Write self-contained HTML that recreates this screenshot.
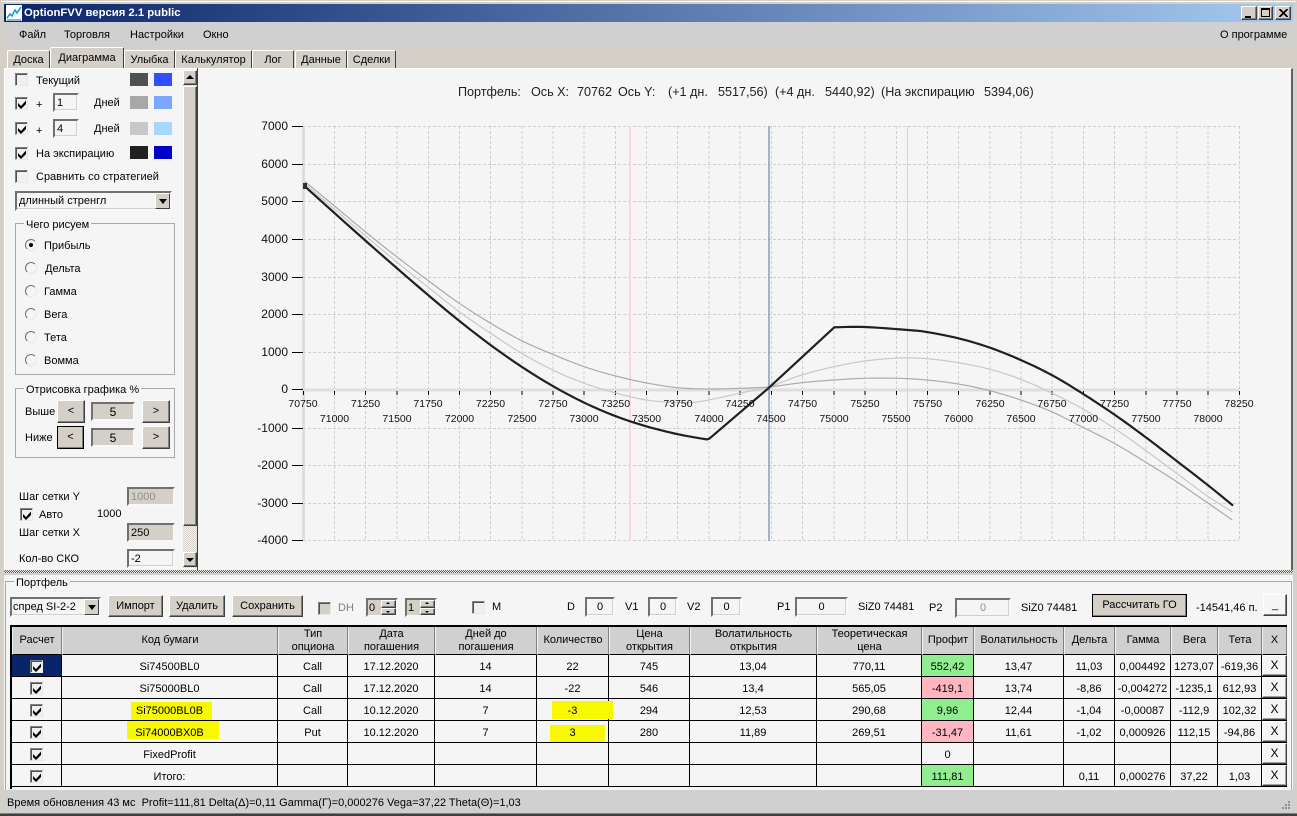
<!DOCTYPE html>
<html><head><meta charset="utf-8"><title>OptionFVV</title>
<style>
*{box-sizing:border-box}
html,body{margin:0;padding:0;width:1297px;height:816px;overflow:hidden;background:#d4d0c8;font:11px/14px "Liberation Sans","Noto Sans CJK SC",sans-serif;color:#000}
.a{position:absolute}
.t{position:absolute;white-space:nowrap;height:14px;line-height:14px;font-size:11px}
.raised{position:absolute;background:#d4d0c8;border:1px solid;border-color:#fff #404040 #404040 #fff;box-shadow:inset -1px -1px 0 #808080;text-align:center}
.sunk{position:absolute;background:#f5f5f5;border:2px solid;border-color:#707070 #f8f8f8 #f8f8f8 #707070;box-shadow:inset -1px -1px 0 #d4d0c8;line-height:17px;font-size:11px;white-space:nowrap;overflow:hidden}
.cb{position:absolute;width:13px;height:13px;background:#f0f0f0;border:1px solid;border-color:#808080 #e8e8e8 #e8e8e8 #808080;box-shadow:inset 1px 1px 0 #505050}
.cb svg{position:absolute;left:1px;top:1px;width:10px;height:10px}
.rd{position:absolute;width:12px;height:12px;border-radius:50%;background:#f5f5f5;border:1px solid;border-color:#707070 #e8e8e8 #e8e8e8 #707070}
.sw{position:absolute;width:18px;height:13px}
.grp{position:absolute;border:1px solid #a8a8a8}
.leg{position:absolute;background:#f5f5f5;padding:0 2px;white-space:nowrap;height:14px;line-height:14px}
.tab{position:absolute;top:50px;height:18px;background:#d4d0c8;border:1px solid;border-color:#fff #404040 #d4d0c8 #fff;border-bottom:0;border-radius:2px 2px 0 0;text-align:center;line-height:18px;font-size:11px;white-space:nowrap}
table{border-collapse:separate;border-spacing:0;table-layout:fixed;position:absolute;left:12px;top:627px;width:1274px;background:#f5f5f5}
th{height:28px;background:#d0d0d0;font-weight:normal;font-size:11px;line-height:13px;padding:0;border-left:1px solid #f0f0f0;border-right:1px solid #808080;border-bottom:1px solid #000;text-align:center;overflow:hidden}
td{height:22px;font-size:11px;padding:2px 0 0;border-right:1px solid #000;border-bottom:1px solid #000;text-align:center;position:relative;white-space:nowrap;overflow:visible}
td .cb{left:18px;top:5px}
td .x{position:absolute;left:0;top:0;width:25px;height:21px;background:#f5f5f5;border:1px solid;border-color:#fff #404040 #404040 #fff;box-shadow:inset -1px -1px 0 #a0a0a0;line-height:19px;font-size:12px}
.g{background:#90ee90}.p{background:#ffb6c1}
.y{position:absolute;background:#f8f800}
.dd{position:absolute;background:#d4d0c8;border:1px solid;border-color:#fff #404040 #404040 #fff}
.dd:after{content:"";position:absolute;left:3px;top:5px;border:4px solid transparent;border-top:5px solid #000;border-bottom:0}
.up:after,.dn:after{content:"";position:absolute;left:4px;border:2px solid transparent}
.up:after{top:1px;border-bottom:2px solid #000;border-top:0}
.dn:after{top:2px;border-top:2px solid #000;border-bottom:0}
</style></head><body>

<!-- window chrome -->
<div class="a" style="left:0;top:0;width:1297px;height:816px;background:#d4d0c8"></div>
<div class="a" style="left:1px;top:1px;width:1295px;height:1px;background:#fff"></div>
<div class="a" style="left:4px;top:4px;width:1289px;height:18px;background:linear-gradient(90deg,#0a246a,#a6caf0)"></div>
<svg class="a" style="left:6px;top:5px" width="16" height="16" viewBox="0 0 16 16"><rect width="16" height="16" fill="#fff"/><path d="M1 13L4 9 6 11 9 5 11 8 15 2" fill="none" stroke="#10a0e8" stroke-width="1.6"/><path d="M1 15H15" stroke="#2060c0"/></svg>
<div class="t" style="left:24px;top:6px;color:#fff;font-weight:bold;font-size:11.3px">OptionFVV версия 2.1 public</div>
<div class="raised" style="left:1241px;top:6px;width:16px;height:14px"><div class="a" style="left:3px;top:9px;width:6px;height:2px;background:#000"></div></div>
<div class="raised" style="left:1258px;top:6px;width:15px;height:14px"><div class="a" style="left:2px;top:1px;width:9px;height:9px;border:1px solid #000;border-top-width:2px"></div></div>
<div class="raised" style="left:1275px;top:6px;width:16px;height:14px"><svg class="a" style="left:3px;top:2px" width="9" height="8"><path d="M0 0L8 8M1 0L9 8M8 0L0 8M9 0L1 8" stroke="#000"/></svg></div>

<div class="a" style="left:4px;top:22px;width:1289px;height:24px;background:#d0d0d0"></div>
<div class="t" style="left:19px;top:28px">Файл</div>
<div class="t" style="left:64px;top:28px">Торговля</div>
<div class="t" style="left:130px;top:28px">Настройки</div>
<div class="t" style="left:203px;top:28px">Окно</div>
<div class="t" style="left:1220px;top:28px">О программе</div>

<!-- tabs -->
<div class="tab" style="left:7px;width:43px">Доска</div>
<div class="tab" style="left:50px;top:47px;width:74px;height:21px;z-index:2;line-height:20px">Диаграмма</div>
<div class="tab" style="left:124px;width:51px">Улыбка</div>
<div class="tab" style="left:175px;width:77px">Калькулятор</div>
<div class="tab" style="left:252px;width:42px">Лог</div>
<div class="tab" style="left:295px;width:52px">Данные</div>
<div class="tab" style="left:347px;width:49px">Сделки</div>

<!-- main panels -->
<div class="a" style="left:4px;top:68px;width:1289px;height:502px;background:#f5f5f5;border-top:1px solid #fff;border-left:1px solid #fff;border-right:2px solid #606060"></div>
<div class="a" style="left:197px;top:68px;width:1px;height:502px;background:#404040"></div>

<!-- left panel -->
<div class="cb" style="left:15px;top:73px"></div>
<div class="t" style="left:36px;top:74px">Текущий</div>
<div class="sw" style="left:130px;top:73px;background:#505050"></div><div class="sw" style="left:154px;top:73px;background:#3050ff"></div>

<div class="cb" style="left:15px;top:97px"><svg viewBox="0 0 10 10"><path d="M1 4L4 7 9 1.5V5L4 10 1 7Z"/></svg></div>
<div class="t" style="left:36px;top:98px">+</div>
<div class="sunk" style="left:53px;top:93px;width:26px;height:19px;padding-left:2px">1</div>
<div class="t" style="left:94px;top:96px">Дней</div>
<div class="sw" style="left:130px;top:96px;background:#a8a8a8"></div><div class="sw" style="left:154px;top:96px;background:#7aa8ff"></div>

<div class="cb" style="left:15px;top:122px"><svg viewBox="0 0 10 10"><path d="M1 4L4 7 9 1.5V5L4 10 1 7Z"/></svg></div>
<div class="t" style="left:36px;top:124px">+</div>
<div class="sunk" style="left:53px;top:119px;width:26px;height:19px;padding-left:2px">4</div>
<div class="t" style="left:94px;top:122px">Дней</div>
<div class="sw" style="left:130px;top:122px;background:#c8c8c8"></div><div class="sw" style="left:154px;top:122px;background:#a8d8ff"></div>

<div class="cb" style="left:15px;top:147px"><svg viewBox="0 0 10 10"><path d="M1 4L4 7 9 1.5V5L4 10 1 7Z"/></svg></div>
<div class="t" style="left:36px;top:147px">На экспирацию</div>
<div class="sw" style="left:130px;top:146px;background:#202020"></div><div class="sw" style="left:154px;top:146px;background:#0000c8"></div>

<div class="cb" style="left:15px;top:170px"></div>
<div class="t" style="left:36px;top:170px">Сравнить со стратегией</div>

<div class="sunk" style="left:15px;top:191px;width:157px;height:20px;padding-left:2px">длинный стренгл</div>
<div class="dd" style="left:155px;top:193px;width:15px;height:16px"></div>

<div class="grp" style="left:15px;top:223px;width:160px;height:152px"></div>
<div class="leg" style="left:24px;top:218px">Чего рисуем</div>
<div class="rd" style="left:25px;top:239px"><div class="a" style="left:3px;top:3px;width:4px;height:4px;border-radius:50%;background:#000"></div></div><div class="t" style="left:44px;top:239px">Прибыль</div>
<div class="rd" style="left:25px;top:262px"></div><div class="t" style="left:45px;top:262px">Дельта</div>
<div class="rd" style="left:25px;top:285px"></div><div class="t" style="left:44px;top:285px">Гамма</div>
<div class="rd" style="left:25px;top:308px"></div><div class="t" style="left:44px;top:308px">Вега</div>
<div class="rd" style="left:25px;top:331px"></div><div class="t" style="left:44px;top:331px">Тета</div>
<div class="rd" style="left:25px;top:354px"></div><div class="t" style="left:44px;top:354px">Вомма</div>

<div class="grp" style="left:15px;top:388px;width:160px;height:70px"></div>
<div class="leg" style="left:24px;top:383px">Отрисовка графика %</div>
<div class="t" style="left:25px;top:405px">Выше</div>
<div class="raised" style="left:57px;top:400px;width:28px;height:23px;line-height:20px">&lt;</div>
<div class="sunk" style="left:91px;top:402px;width:44px;height:19px;background:#d4d0c8;text-align:center;font-size:12px">5</div>
<div class="raised" style="left:142px;top:400px;width:28px;height:23px;line-height:20px">&gt;</div>
<div class="t" style="left:25px;top:431px">Ниже</div>
<div class="raised" style="left:57px;top:426px;width:27px;height:23px;line-height:20px;outline:1px solid #000;outline-offset:-1px">&lt;</div>
<div class="sunk" style="left:91px;top:428px;width:44px;height:19px;background:#d4d0c8;text-align:center;font-size:12px">5</div>
<div class="raised" style="left:142px;top:426px;width:28px;height:23px;line-height:20px">&gt;</div>

<div class="t" style="left:19px;top:490px">Шаг сетки Y</div>
<div class="sunk" style="left:127px;top:487px;width:48px;height:19px;background:#d4d0c8;color:#909090;padding-left:2px">1000</div>
<div class="cb" style="left:20px;top:508px"><svg viewBox="0 0 10 10"><path d="M1 4L4 7 9 1.5V5L4 10 1 7Z"/></svg></div>
<div class="t" style="left:39px;top:508px">Авто</div>
<div class="t" style="left:97px;top:507px">1000</div>
<div class="t" style="left:19px;top:526px">Шаг сетки X</div>
<div class="sunk" style="left:127px;top:523px;width:48px;height:19px;background:#d4d0c8;padding-left:2px">250</div>
<div class="t" style="left:19px;top:552px">Кол-во СКО</div>
<div class="sunk" style="left:127px;top:549px;width:48px;height:19px;padding-left:2px">-2</div>

<!-- scrollbar -->
<div class="a" style="left:183px;top:70px;width:14px;height:498px;background:repeating-conic-gradient(#d4d0c8 0 25%,#f5f5f5 0 50%) 0 0/2px 2px"></div>
<div class="raised" style="left:183px;top:70px;width:14px;height:15px"><div class="a" style="left:2px;top:4px;border:4px solid transparent;border-bottom:4px solid #000;border-top:0"></div></div>
<div class="raised" style="left:183px;top:86px;width:14px;height:440px"></div>
<div class="raised" style="left:183px;top:552px;width:14px;height:15px"><div class="a" style="left:2px;top:5px;border:4px solid transparent;border-top:4px solid #000;border-bottom:0"></div></div>

<!-- chart -->
<svg class="a" style="left:198px;top:69px" width="1093" height="500" viewBox="198 69 1093 500" font-family="Liberation Sans, sans-serif">
<g font-size="12.6" fill="#202020">
<text x="458" y="96">Портфель:</text><text x="531" y="96">Ось X:</text><text x="577" y="96">70762</text><text x="618" y="96">Ось Y:</text><text x="668" y="96">(+1 дн.</text><text x="718" y="96">5517,56)</text><text x="775" y="96">(+4 дн.</text><text x="825" y="96">5440,92)</text><text x="881" y="96">(На экспирацию</text><text x="984" y="96">5394,06)</text>
</g>
<g stroke="#cfcfcf" stroke-dasharray="3 2" fill="none">
<path d="M303 126.5H1239M303 164.5H1239M303 201.5H1239M303 239.5H1239M303 277.5H1239M303 314.5H1239M303 352.5H1239M303 428.5H1239M303 465.5H1239M303 503.5H1239M303 540.5H1239"/>
<path d="M334.5 126V541M365.5 126V541M397 126V541M428.5 126V541M459.5 126V541M490.5 126V541M522 126V541M553 126V541M584 126V541M615.5 126V541M646.5 126V541M677.5 126V541M709 126V541M740 126V541M771.5 126V541M802.5 126V541M834 126V541M865 126V541M896.5 126V541M927.5 126V541M958.5 126V541M990 126V541M1021 126V541M1052 126V541M1083.5 126V541M1114.5 126V541M1146 126V541M1177 126V541M1208 126V541M1239.5 126V541"/>
</g>
<rect x="302" y="126" width="3" height="415" fill="#dedede"/>
<rect x="303" y="388.5" width="936" height="3" fill="#dedede"/>
<path d="M630 126V541" stroke="#ffd4da" stroke-width="2"/>
<path d="M769 126V541" stroke="#8c9cb4" stroke-width="1.5"/>
<path d="M907.5 126V541" stroke="#ffc0cb" stroke-width="1"/>
<path d="M292 126.5H303M292 164.5H303M292 201.5H303M292 239.5H303M292 277.5H303M292 314.5H303M292 352.5H303M292 389.5H303M292 428.5H303M292 465.5H303M292 503.5H303M292 540.5H303" stroke="#000"/>
<path d="M303.5 391V395M334.5 391V395M365.5 391V395M397 391V395M428.5 391V395M459.5 391V395M490.5 391V395M522 391V395M553 391V395M584 391V395M615.5 391V395M646.5 391V395M677.5 391V395M709 391V395M740 391V395M771.5 391V395M802.5 391V395M834 391V395M865 391V395M896.5 391V395M927.5 391V395M958.5 391V395M990 391V395M1021 391V395M1052 391V395M1083.5 391V395M1114.5 391V395M1146 391V395M1177 391V395M1208 391V395M1239.5 391V395" stroke="#000"/>
<polyline class="sm" fill="none" stroke="#c8c8c8" stroke-width="1.2" points="305,184 333.3,208.3 365.3,235.7 396.7,262 428.3,287.3 459.3,311.7 490.7,333.3 521.7,353.3 552.7,370 584.3,383.3 615.7,393 646.7,400 677.7,402.7 693,402.3 708.7,400 739.3,393.3 768.3,387 801.7,375 834,366.7 865,361 898.3,358 926.7,358.7 958.3,362.7 990,369.3 1020.7,379.3 1051.7,393 1081.7,408.3 1114.3,428.3 1145,450 1176.7,473.3 1208.3,496.7 1232.3,511.7"/>
<polyline class="sm" fill="none" stroke="#aaaaaa" stroke-width="1.2" points="305,181.7 333.3,205 365.3,231.7 396.7,256.7 428.3,280.7 459.3,303.3 490.7,323.3 521.7,340.7 552.7,354.3 584.3,366.7 615.7,376 646.7,383 677.7,387.7 708.7,389 739.3,388.3 768.3,387 801.7,382.7 834,380 865,378.3 898.3,378.3 926.7,380 958.3,384 990,390.7 1020.7,400 1051.7,411.7 1081.7,426.7 1114.3,443.3 1145,461.7 1176.7,481.7 1208.3,503.3 1232.3,520"/>
<polyline class="sm" fill="none" stroke="#202020" stroke-width="2.2" stroke-linejoin="round" stroke-linecap="round" points="305,186.5 333.3,212 365.3,240.5 396.7,268 428.3,295.2 459.3,320.9 490.7,345.1 521.7,366.8 552.7,386 584.3,402.7 615.7,416.2 646.7,426.4 677.7,434.2 706.7,439.4"/>
<polyline fill="none" stroke="#202020" stroke-width="2.2" stroke-linejoin="round" stroke-linecap="round" points="706.7,439.4 709.3,438.7 768.3,388.3 834.3,327.3"/>
<polyline class="sm" fill="none" stroke="#202020" stroke-width="2.2" stroke-linejoin="round" stroke-linecap="round" points="834.3,327.3 865,327 907.7,330 926.7,332 958.3,338.3 990,347.7 1020.7,360 1051.7,375 1081.7,393 1114.3,414.5 1145,436.7 1176.7,461 1208.3,485.5 1232.3,505"/>
<rect x="303" y="183" width="4" height="6" fill="#303030"/>
<g font-size="12" fill="#101010" text-anchor="end">
<text x="288" y="130">7000</text><text x="288" y="168">6000</text><text x="288" y="205">5000</text><text x="288" y="243">4000</text><text x="288" y="281">3000</text><text x="288" y="318">2000</text><text x="288" y="356">1000</text><text x="288" y="393">0</text><text x="288" y="432">-1000</text><text x="288" y="469">-2000</text><text x="288" y="507">-3000</text><text x="288" y="544">-4000</text>
</g>
</svg>
<svg class="a" style="left:198px;top:395px" width="1093" height="32" viewBox="198 395 1093 32" font-family="Liberation Sans, sans-serif" font-size="10.5" fill="#101010" text-anchor="middle">
<g>
<text x="303" y="407">70750</text><text x="365.5" y="407">71250</text><text x="428" y="407">71750</text><text x="490.5" y="407">72250</text><text x="553" y="407">72750</text><text x="615.5" y="407">73250</text><text x="678" y="407">73750</text><text x="740" y="407">74250</text><text x="802.5" y="407">74750</text><text x="865" y="407">75250</text><text x="927.5" y="407">75750</text><text x="990" y="407">76250</text><text x="1052" y="407">76750</text><text x="1114.5" y="407">77250</text><text x="1177" y="407">77750</text><text x="1239" y="407">78250</text>
</g><g>
<text x="334.5" y="422">71000</text><text x="397" y="422">71500</text><text x="459.5" y="422">72000</text><text x="522" y="422">72500</text><text x="584" y="422">73000</text><text x="646.5" y="422">73500</text><text x="709" y="422">74000</text><text x="771" y="422">74500</text><text x="834" y="422">75000</text><text x="896" y="422">75500</text><text x="958.5" y="422">76000</text><text x="1021" y="422">76500</text><text x="1083.5" y="422">77000</text><text x="1146" y="422">77500</text><text x="1208" y="422">78000</text>
</g>
</svg>

<!-- splitter -->
<div class="a" style="left:4px;top:570px;width:1289px;height:5px;background:#d4d0c8"></div>
<div class="a" style="left:4px;top:570px;width:1289px;height:3px;background:repeating-conic-gradient(#606060 0 25%,#e8e8e8 0 50%) 0 0/2px 2px"></div>

<!-- portfolio -->
<div class="a" style="left:4px;top:575px;width:1289px;height:215px;background:#f5f5f5"></div>
<div class="grp" style="left:5px;top:581px;width:1287px;height:210px"></div>
<div class="leg" style="left:14px;top:576px">Портфель</div>

<div class="sunk" style="left:10px;top:597px;width:91px;height:20px;padding-left:1px">спред SI-2-2</div>
<div class="dd" style="left:84px;top:599px;width:15px;height:16px"></div>
<div class="raised" style="left:108px;top:595px;width:55px;height:22px;line-height:20px">Импорт</div>
<div class="raised" style="left:169px;top:595px;width:56px;height:22px;line-height:20px">Удалить</div>
<div class="raised" style="left:232px;top:595px;width:71px;height:22px;line-height:20px">Сохранить</div>

<div class="cb" style="left:318px;top:602px;background:#d4d0c8"></div>
<div class="t" style="left:338px;top:601px;color:#808080">DH</div>
<div class="sunk" style="left:366px;top:598px;width:32px;height:19px;background:#d4d0c8;padding-left:1px">0</div>
<div class="raised up" style="left:381px;top:600px;width:15px;height:8px"></div><div class="raised dn" style="left:381px;top:608px;width:15px;height:7px"></div>
<div class="sunk" style="left:405px;top:598px;width:32px;height:19px;background:#d4d0c8;padding-left:1px">1</div>
<div class="raised up" style="left:420px;top:600px;width:15px;height:8px"></div><div class="raised dn" style="left:420px;top:608px;width:15px;height:7px"></div>
<div class="cb" style="left:472px;top:601px"></div>
<div class="t" style="left:492px;top:600px">M</div>
<div class="t" style="left:567px;top:600px">D</div>
<div class="sunk" style="left:585px;top:597px;width:30px;height:20px;text-align:center">0</div>
<div class="t" style="left:625px;top:600px">V1</div>
<div class="sunk" style="left:648px;top:597px;width:30px;height:20px;text-align:center">0</div>
<div class="t" style="left:687px;top:600px">V2</div>
<div class="sunk" style="left:711px;top:597px;width:31px;height:20px;text-align:center">0</div>
<div class="t" style="left:777px;top:600px">P1</div>
<div class="sunk" style="left:795px;top:597px;width:53px;height:20px;text-align:center">0</div>
<div class="t" style="left:858px;top:600px">SiZ0 74481</div>
<div class="t" style="left:929px;top:601px">P2</div>
<div class="sunk" style="left:955px;top:598px;width:56px;height:20px;text-align:center;color:#909090">0</div>
<div class="t" style="left:1021px;top:601px">SiZ0 74481</div>
<div class="raised" style="left:1092px;top:594px;width:95px;height:23px;line-height:20px;outline:1px solid #000;outline-offset:-1px">Рассчитать ГО</div>
<div class="t" style="left:1196px;top:601px">-14541,46 п.</div>
<div class="raised" style="left:1263px;top:594px;width:24px;height:22px;line-height:20px;background:#f5f5f5">_</div>

<!-- table -->
<div class="a" style="left:10px;top:625px;width:1277px;height:2px;background:#000"></div>
<div class="a" style="left:10px;top:625px;width:2px;height:164px;background:#000"></div>
<table>
<colgroup><col style="width:50px"><col style="width:216px"><col style="width:70px"><col style="width:87px"><col style="width:102px"><col style="width:72px"><col style="width:81px"><col style="width:127px"><col style="width:105px"><col style="width:52px"><col style="width:90px"><col style="width:51px"><col style="width:56px"><col style="width:47px"><col style="width:44px"><col style="width:25px"></colgroup>
<tr><th>Расчет</th><th>Код бумаги</th><th>Тип<br>опциона</th><th>Дата<br>погашения</th><th>Дней до<br>погашения</th><th>Количество</th><th>Цена<br>открытия</th><th>Волатильность<br>открытия</th><th>Теоретическая<br>цена</th><th>Профит</th><th>Волатильность</th><th>Дельта</th><th>Гамма</th><th>Вега</th><th>Тета</th><th>X</th></tr>
<tr><td style="background:#0a246a"><div class="cb"><svg viewBox="0 0 10 10"><path d="M1 4L4 7 9 1.5V5L4 10 1 7Z"/></svg></div></td><td>Si74500BL0</td><td>Call</td><td>17.12.2020</td><td>14</td><td>22</td><td>745</td><td>13,04</td><td>770,11</td><td class="g">552,42</td><td>13,47</td><td>11,03</td><td>0,004492</td><td>1273,07</td><td>-619,36</td><td><div class="x">X</div></td></tr>
<tr><td><div class="cb"><svg viewBox="0 0 10 10"><path d="M1 4L4 7 9 1.5V5L4 10 1 7Z"/></svg></div></td><td>Si75000BL0</td><td>Call</td><td>17.12.2020</td><td>14</td><td>-22</td><td>546</td><td>13,4</td><td>565,05</td><td class="p">-419,1</td><td>13,74</td><td>-8,86</td><td>-0,004272</td><td>-1235,1</td><td>612,93</td><td><div class="x">X</div></td></tr>
<tr><td><div class="cb"><svg viewBox="0 0 10 10"><path d="M1 4L4 7 9 1.5V5L4 10 1 7Z"/></svg></div></td><td><div class="y" style="left:69px;top:3px;width:81px;height:18px"></div><span style="position:relative">Si75000BL0B</span></td><td>Call</td><td>10.12.2020</td><td>7</td><td><div class="y" style="left:15px;top:2px;width:61px;height:18px"></div><span style="position:relative">-3</span></td><td>294</td><td>12,53</td><td>290,68</td><td class="g">9,96</td><td>12,44</td><td>-1,04</td><td>-0,00087</td><td>-112,9</td><td>102,32</td><td><div class="x">X</div></td></tr>
<tr><td><div class="cb"><svg viewBox="0 0 10 10"><path d="M1 4L4 7 9 1.5V5L4 10 1 7Z"/></svg></div></td><td><div class="y" style="left:65px;top:0;width:92px;height:18px"></div><span style="position:relative">Si74000BX0B</span></td><td>Put</td><td>10.12.2020</td><td>7</td><td><div class="y" style="left:13px;top:4px;width:55px;height:17px"></div><span style="position:relative">3</span></td><td>280</td><td>11,89</td><td>269,51</td><td class="p">-31,47</td><td>11,61</td><td>-1,02</td><td>0,000926</td><td>112,15</td><td>-94,86</td><td><div class="x">X</div></td></tr>
<tr><td><div class="cb"><svg viewBox="0 0 10 10"><path d="M1 4L4 7 9 1.5V5L4 10 1 7Z"/></svg></div></td><td>FixedProfit</td><td></td><td></td><td></td><td></td><td></td><td></td><td></td><td>0</td><td></td><td></td><td></td><td></td><td></td><td><div class="x">X</div></td></tr>
<tr><td><div class="cb"><svg viewBox="0 0 10 10"><path d="M1 4L4 7 9 1.5V5L4 10 1 7Z"/></svg></div></td><td>Итого:</td><td></td><td></td><td></td><td></td><td></td><td></td><td></td><td class="g">111,81</td><td></td><td>0,11</td><td>0,000276</td><td>37,22</td><td>1,03</td><td><div class="x">X</div></td></tr>
</table>

<!-- status bar -->
<div class="a" style="left:4px;top:790px;width:1289px;height:23px;background:#d0d0d0"></div>
<div class="a" style="left:0;top:813px;width:1297px;height:1px;background:#808080"></div>
<div class="a" style="left:0;top:814px;width:1297px;height:2px;background:#404040"></div>
<div class="t" style="left:7px;top:796px">Время обновления 43 мс&nbsp; Profit=111,81 Delta(Δ)=0,11 Gamma(Γ)=0,000276 Vega=37,22 Theta(Θ)=1,03</div>
<svg class="a" style="left:1280px;top:800px" width="11" height="11"><g fill="#909090"><rect x="8" y="1" width="2" height="2"/><rect x="5" y="4" width="2" height="2"/><rect x="8" y="4" width="2" height="2"/><rect x="2" y="7" width="2" height="2"/><rect x="5" y="7" width="2" height="2"/><rect x="8" y="7" width="2" height="2"/></g></svg>
<script>
document.querySelectorAll('polyline.sm').forEach(function(el){
  var p=el.getAttribute('points').trim().split(/\s+/).map(function(s){return s.split(',').map(Number)});
  var q=p;
  var out=[];
  for(var i=0;i<q.length-1;i++){
    var a=q[Math.max(i-1,0)],b=q[i],c=q[i+1],d=q[Math.min(i+2,q.length-1)];
    for(var k=0;k<8;k++){var t=k/8,t2=t*t,t3=t2*t;
      out.push([0,1].map(function(j){return (0.5*(2*b[j]+(c[j]-a[j])*t+(2*a[j]-5*b[j]+4*c[j]-d[j])*t2+(3*b[j]-a[j]-3*c[j]+d[j])*t3)).toFixed(2)}).join(','));}
  }
  out.push(q[q.length-1].join(','));
  el.setAttribute('points',out.join(' '));
});
</script>
</body></html>
